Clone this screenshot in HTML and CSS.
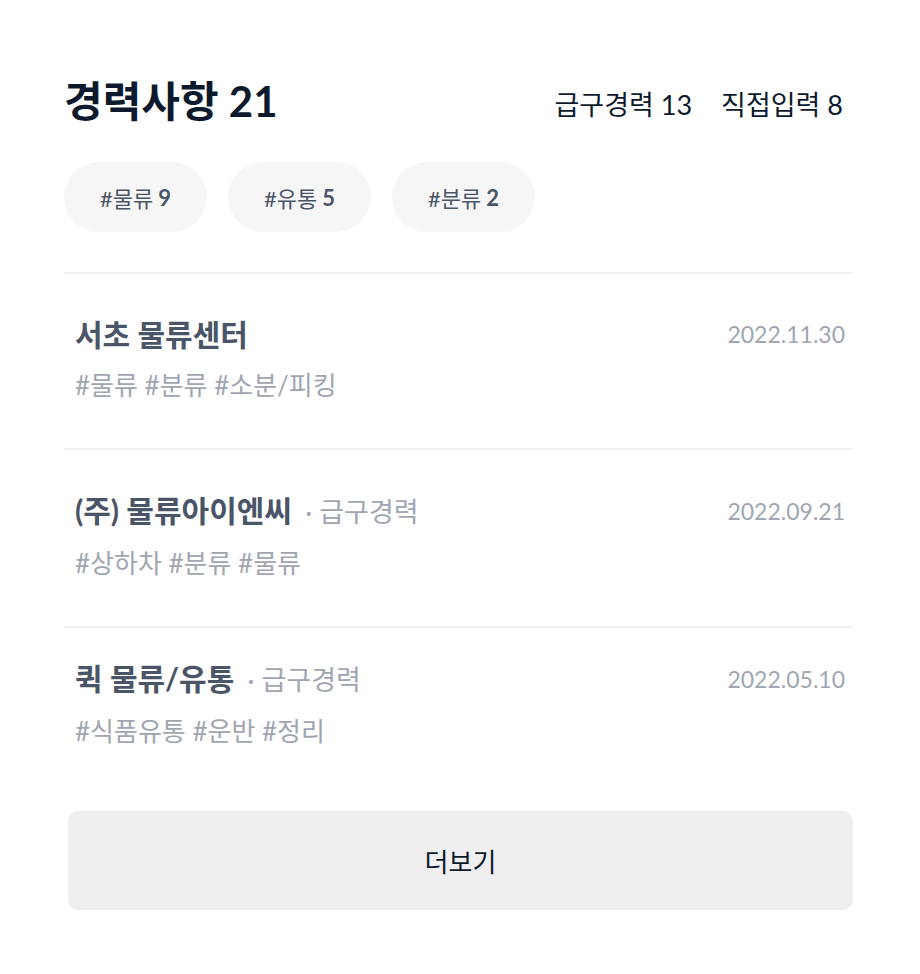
FILE: index.html
```html
<!DOCTYPE html>
<html lang="ko">
<head>
    <meta charset="UTF-8">
    <meta name="viewport" content="width=device-width, initial-scale=1.0">
    <title>경력사항</title>
    <link rel="stylesheet" href="styles.css">
</head>
<body>
    <div class="container">
        <div class="header">
            <h1>경력사항 <span class="num">21</span></h1>
            <div class="summary">
                <span>급구경력 13</span>
                <span>직접입력 8</span>
            </div>
        </div>

        <div class="chips">
            <div class="chip">#물류 <b>9</b></div>
            <div class="chip">#유통 <b>5</b></div>
            <div class="chip">#분류 <b>2</b></div>
        </div>

        <div class="career-list">
            <div class="career-item">
                <div class="career-top">
                    <div class="career-name">서초 물류센터</div>
                    <div class="career-date">2022.11.30</div>
                </div>
                <div class="career-tags">#물류 #분류 #소분/피킹</div>
            </div>
            <div class="career-item">
                <div class="career-top">
                    <div class="career-name">(주) 물류아이엔씨 <span class="career-type">· 급구경력</span></div>
                    <div class="career-date">2022.09.21</div>
                </div>
                <div class="career-tags">#상하차 #분류 #물류</div>
            </div>
            <div class="career-item">
                <div class="career-top">
                    <div class="career-name">퀵 물류/유통 <span class="career-type">· 급구경력</span></div>
                    <div class="career-date">2022.05.10</div>
                </div>
                <div class="career-tags">#식품유통 #운반 #정리</div>
            </div>
        </div>

        <button class="more-btn">더보기</button>
    </div>
</body>
</html>
```

FILE: styles.css
```css
body {
    font-family: Lato, 'Noto Sans CJK KR', sans-serif;
    margin: 0;
    background: white;
}
.container {
    width: 789px;
    margin-left: 64px;
    padding-top: 77px;
}
.header {
    display: flex;
    justify-content: space-between;
    align-items: center;
    padding-right: 10px;
}
.header h1 {
    margin: 0;
    font-size: 42px;
    line-height: 48px;
    font-weight: bold;
    color: #0d1a2d;
}
.summary {
    display: flex;
    gap: 29px;
    font-size: 27px;
    color: #0d1a2d;
    padding-top: 4px;
}
.chips {
    display: flex;
    gap: 21px;
    margin-top: 37px;
    padding-bottom: 40px;
    border-bottom: 2px solid #f0f0f2;
}
.chip {
    width: 143px;
    height: 70px;
    border-radius: 35px;
    background: #f6f6f7;
    display: flex;
    align-items: center;
    justify-content: center;
    font-size: 22px;
    color: #4a5568;
}
.chip b {
    margin-left: 5px;
}
.career-item {
    padding: 40px 8px 46px 11px;
    border-bottom: 2px solid #f0f0f2;
}
.career-item:last-child {
    border-bottom: none;
    padding-top: 30px;
    padding-bottom: 0;
}
.career-top {
    display: flex;
    justify-content: space-between;
    align-items: center;
}
.career-name {
    font-size: 30px;
    line-height: 40px;
    font-weight: bold;
    color: #4a5568;
}
.career-type {
    font-size: 27px;
    font-weight: normal;
    color: #a0a6b1;
    margin-left: 6px;
}
.career-date {
    font-size: 23px;
    color: #a0a6b1;
}
.career-tags {
    margin-top: 14px;
    font-size: 26px;
    line-height: 34px;
    color: #a0a6b1;
}
.more-btn {
    display: block;
    width: 785px;
    height: 99px;
    margin: 63px 0 0 4px;
    border: none;
    border-radius: 10px;
    background: #efefef;
    font-family: Lato, 'Noto Sans CJK KR', sans-serif;
    font-size: 26px;
    color: #0d1a2d;
    cursor: pointer;
}
```
